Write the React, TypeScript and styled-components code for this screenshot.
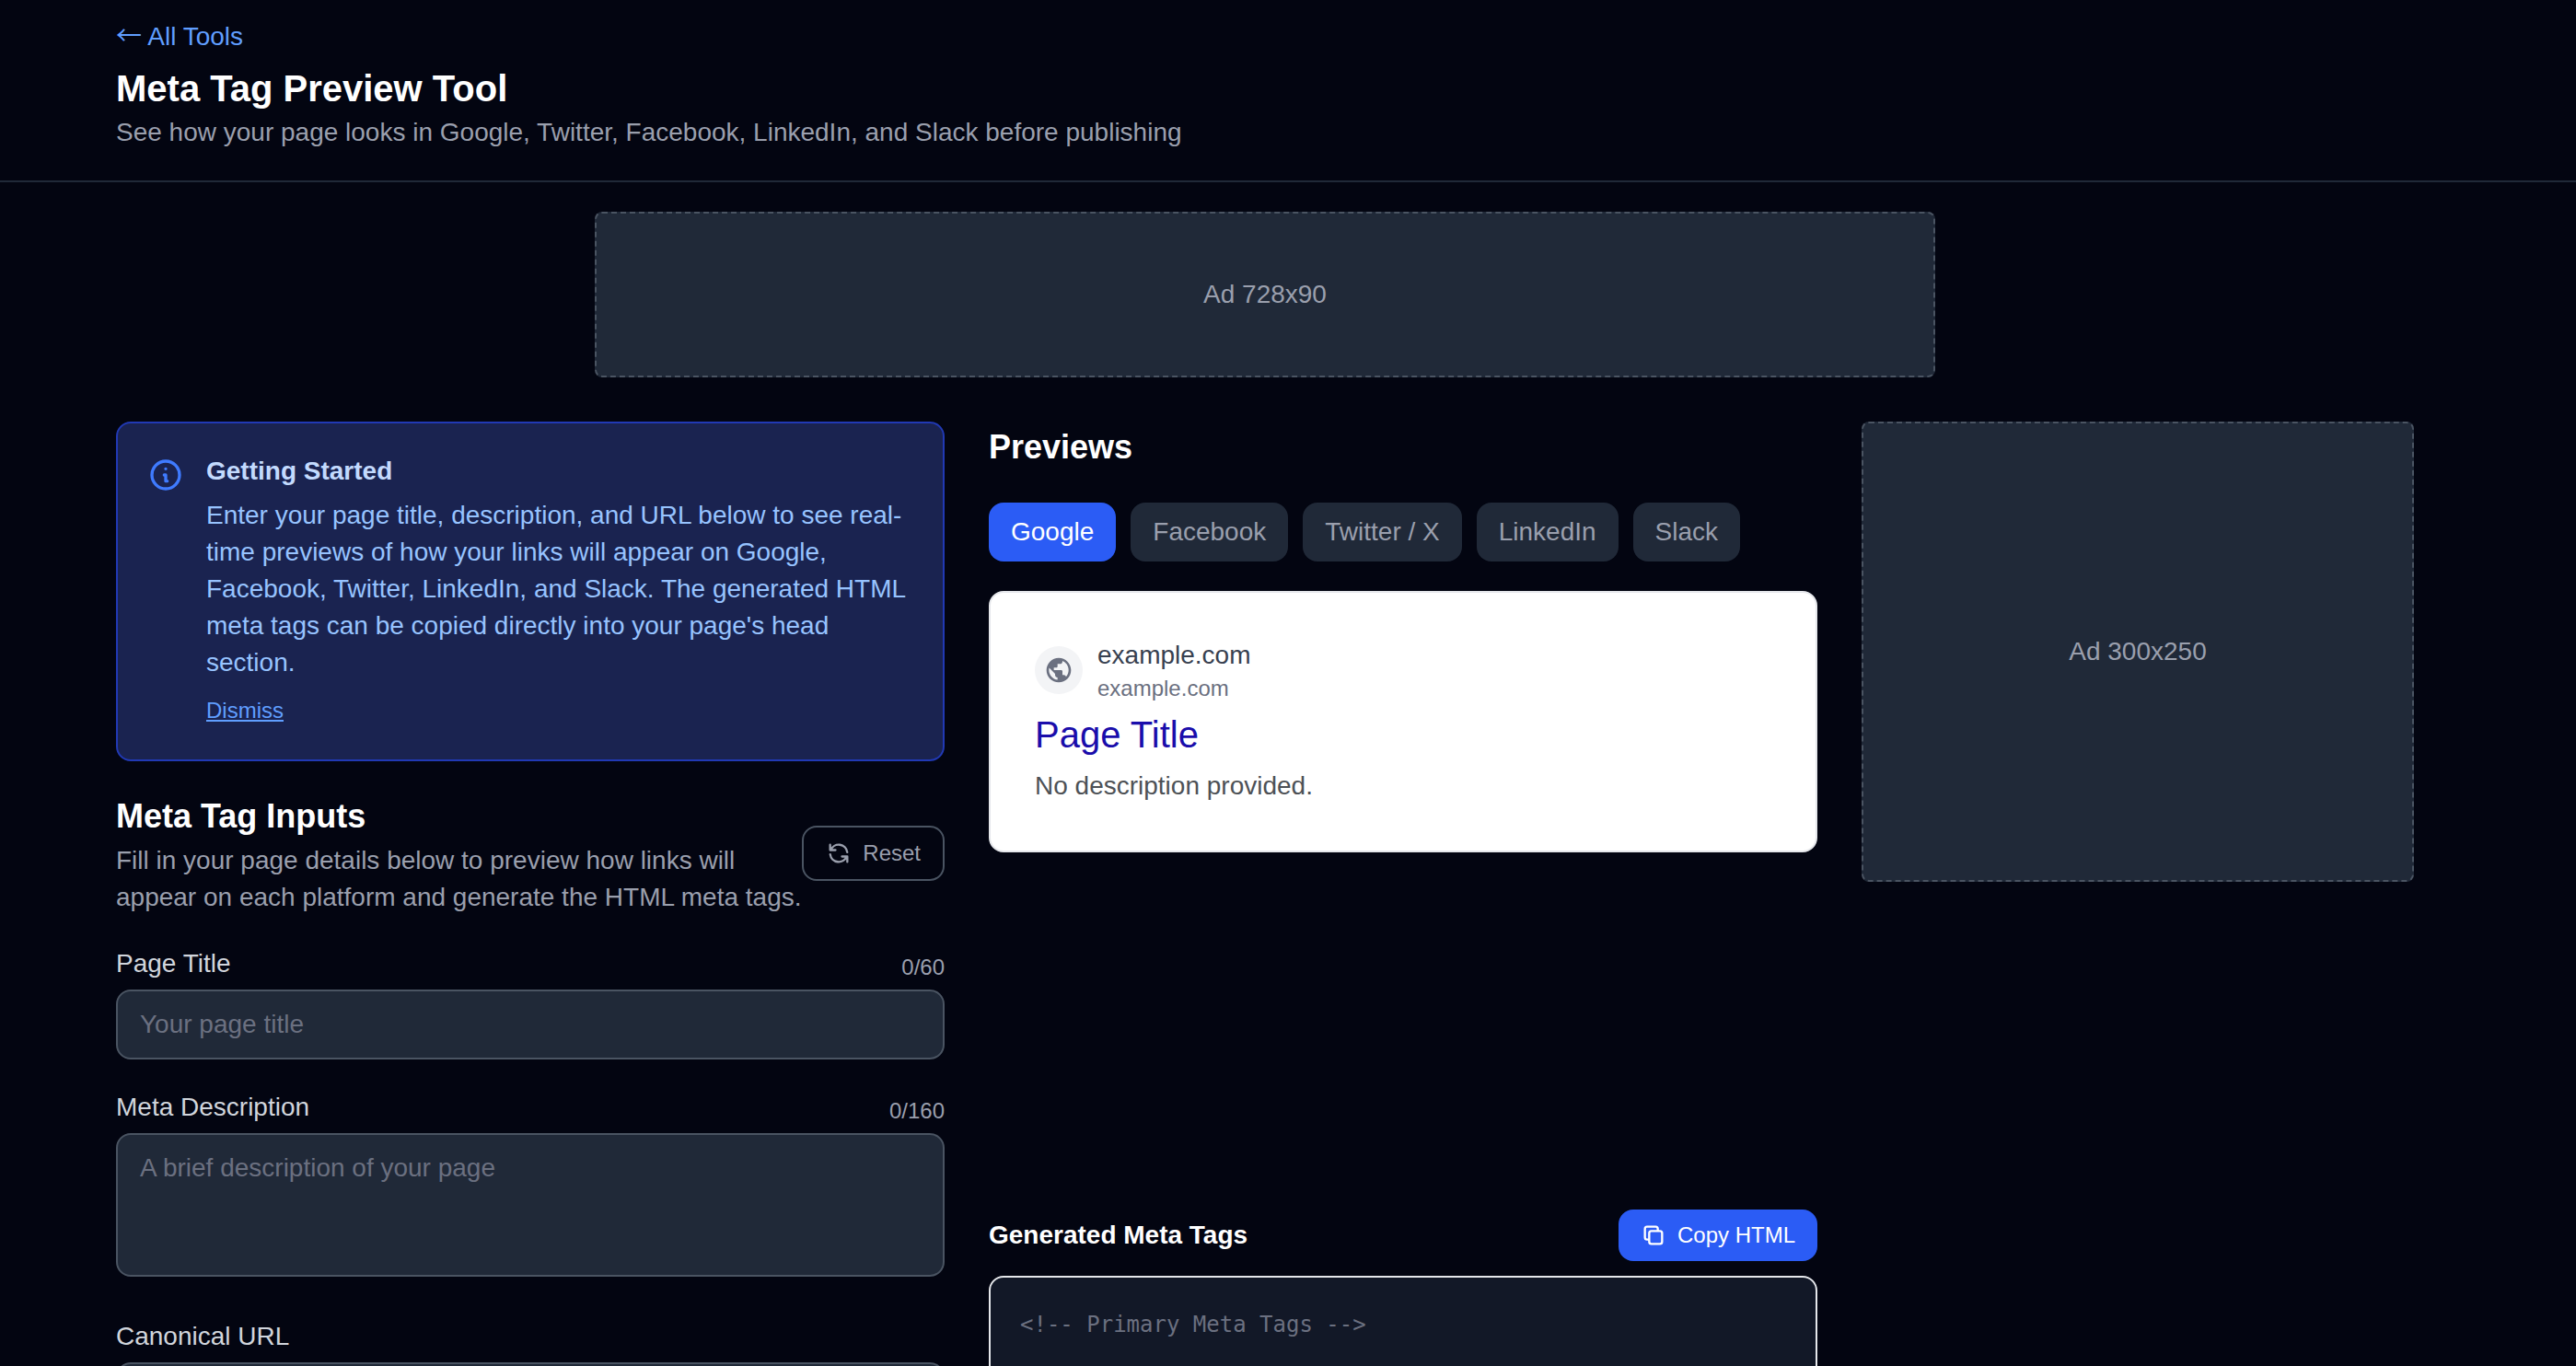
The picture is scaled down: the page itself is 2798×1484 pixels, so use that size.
import React, { useState } from "react";
import styled, { createGlobalStyle } from "styled-components";

const sans = `"Liberation Sans", Arial, Helvetica, sans-serif`;
const mono = `"DejaVu Sans Mono", Menlo, monospace`;

const color = {
  page: "#030511",
  surface: "#202938",
  line: "#4a5462",
  text: "#9a9fad",
  faint: "#6b7080",
  label: "#d1d5dc",
  accent: "#2b5cf5",
  link: "#609eff",
};

const GlobalStyle = createGlobalStyle`
  *, *::before, *::after { box-sizing: border-box; }
  body {
    margin: 0;
    background: ${color.page};
    color: #ffffff;
    font-family: ${sans};
    font-size: 28px;
    line-height: 40px;
  }
  h1, h2, h3, p, pre { margin: 0; }
  button, input, textarea { font-family: inherit; }
`;

const Page = styled.div`
  height: 100vh;
  overflow: hidden;
`;

const Header = styled.header`
  padding: 20px 0 32px;
  border-bottom: 2px solid ${color.surface};
`;

const Container = styled.div`
  max-width: 2610px;
  margin: 0 auto;
  padding: 0 82px 0 32px;
`;

const BackLink = styled.a`
  display: block;
  width: fit-content;
  margin-bottom: 8px;
  color: ${color.link};
  text-decoration: none;
`;

const Arrow = styled.span`
  display: inline-block;
  width: 28px;
  font-family: "Noto Sans CJK JP", sans-serif;
  line-height: 20px;
`;

const Title = styled.h1`
  font-size: 40px;
  line-height: 56px;
`;

const Muted = styled.p`
  color: ${color.text};
`;

const AdSlot = styled.div<{ $width: number; $height: number }>`
  display: flex;
  align-items: center;
  justify-content: center;
  width: ${(p) => p.$width}px;
  max-width: 100%;
  height: ${(p) => p.$height}px;
  border: 2px dashed ${color.line};
  border-radius: 8px;
  background: ${color.surface};
  color: ${color.text};
`;

const Banner = styled.div`
  display: flex;
  justify-content: center;
  padding: 32px 0 48px;
`;

const Columns = styled.main`
  display: grid;
  grid-template-columns: 1fr 1fr 600px;
  gap: 48px;
  align-items: start;
`;

const Notice = styled.aside`
  display: flex;
  gap: 24px;
  padding: 32px;
  margin-bottom: 32px;
  border: 2px solid #2139b4;
  border-radius: 16px;
  background: #1a2350;
`;

const NoticeIcon = styled.svg`
  flex: none;
  width: 40px;
  height: 40px;
  margin-top: 4px;
`;

const NoticeBody = styled.div`
  font-size: 32px;
  line-height: 48px;
`;

const NoticeTitle = styled.h3`
  margin-bottom: 8px;
  color: #c3dafe;
  font-size: 28px;
  line-height: 40px;
`;

const NoticeText = styled.p`
  color: #97c3ff;
  font-size: 28px;
  line-height: 40px;
`;

const Dismiss = styled.button`
  padding: 0;
  margin: 16px 0 0;
  border: 0;
  background: none;
  color: ${color.link};
  font-size: 24px;
  line-height: 32px;
  text-decoration: underline;
`;

const Heading = styled.h2`
  font-size: 36px;
  line-height: 56px;
`;

const FormIntro = styled.div`
  display: flex;
  align-items: center;
  justify-content: space-between;
  margin-bottom: 32px;
`;

const SmallButton = styled.button<{ $outlined?: boolean }>`
  display: flex;
  align-items: center;
  flex: none;
  gap: 12px;
  padding: 12px 24px;
  border: ${(p) => (p.$outlined ? `2px solid ${color.line}` : "0")};
  border-radius: 16px;
  background: ${(p) => (p.$outlined ? "none" : color.accent)};
  color: ${(p) => (p.$outlined ? color.text : "#ffffff")};
  font-size: 24px;
  line-height: 32px;
`;

const ButtonIcon = styled.svg`
  flex: none;
  width: 28px;
  height: 28px;
`;

const SiteIcon = styled.svg`
  width: 32px;
  height: 32px;
`;

const Field = styled.div`
  margin-bottom: 32px;
  font-size: 32px;
  line-height: 48px;
`;

const FieldHead = styled.div`
  display: flex;
  align-items: flex-end;
  justify-content: space-between;
  margin-bottom: 8px;
`;

const Label = styled.label`
  color: ${color.label};
  font-size: 28px;
  line-height: 40px;
`;

const Counter = styled.span`
  color: ${color.text};
  font-size: 24px;
  line-height: 32px;
`;

const TextInput = styled.input`
  display: block;
  width: 100%;
  padding: 16px 24px;
  border: 2px solid ${color.line};
  border-radius: 16px;
  background: ${color.surface};
  color: #ffffff;
  font-size: 28px;
  line-height: 40px;
  &::placeholder { color: ${color.faint}; opacity: 1; }
`;

const TextArea = styled.textarea`
  width: 100%;
  padding: 16px 24px;
  border: 2px solid ${color.line};
  border-radius: 16px;
  background: ${color.surface};
  color: #ffffff;
  font-size: 28px;
  line-height: 40px;
  resize: none;
  &::placeholder { color: ${color.faint}; opacity: 1; }
`;

const Tabs = styled.div`
  display: flex;
  flex-wrap: wrap;
  gap: 16px;
  margin: 32px 0;
`;

const Tab = styled.button<{ $active: boolean }>`
  padding: 12px 24px;
  border: 0;
  border-radius: 16px;
  background: ${(p) => (p.$active ? color.accent : color.surface)};
  color: ${(p) => (p.$active ? "#ffffff" : color.text)};
  font-size: 28px;
  line-height: 40px;
`;

const PreviewArea = styled.div`
  min-height: 640px;
  margin-bottom: 32px;
`;

const PreviewCard = styled.article`
  padding: 48px;
  border: 2px solid #e5e7eb;
  border-radius: 16px;
  background: #ffffff;
`;

const Site = styled.div`
  display: flex;
  align-items: center;
  gap: 16px;
`;

const Favicon = styled.span`
  display: flex;
  align-items: center;
  justify-content: center;
  width: 52px;
  height: 52px;
  border-radius: 50%;
  background: #f3f4f6;
`;

const SiteName = styled.p`
  color: #384150;
`;

const SiteUrl = styled.p`
  color: ${color.faint};
  font-size: 24px;
  line-height: 32px;
`;

const ResultTitle = styled.h3`
  margin: 8px 0;
  color: #1a0dab;
  font-size: 40px;
  font-weight: 400;
  line-height: 52px;
`;

const ResultText = styled.p`
  color: #4d5156;
  line-height: 44px;
`;

const CodeHead = styled.div`
  display: flex;
  align-items: center;
  justify-content: space-between;
  margin-bottom: 16px;
`;

const CodeTitle = styled.h3`
  font-size: 28px;
  line-height: 40px;
`;

const CodeBlock = styled.pre`
  padding: 32px;
  border: 2px solid #e5e7eb;
  border-radius: 16px;
  background: #121827;
  color: ${color.faint};
  font-family: ${mono};
  font-size: 24px;
  line-height: 38px;
`;

const networks = ["Google", "Facebook", "Twitter / X", "LinkedIn", "Slack"];

const code = `<!-- Primary Meta Tags -->

`;

export default function App() {
  const [active, setActive] = useState("Google");
  return (
    <Page>
      <GlobalStyle />
      <Header>
        <Container>
          <BackLink href="#">
            <Arrow>←</Arrow> All Tools
          </BackLink>
          <Title>Meta Tag Preview Tool</Title>
          <Muted>
            See how your page looks in Google, Twitter, Facebook, LinkedIn, and Slack before publishing
          </Muted>
        </Container>
      </Header>
      <Container>
        <Banner>
          <AdSlot $width={1456} $height={180}>Ad 728x90</AdSlot>
        </Banner>
        <Columns>
          <section>
            <Notice>
              <NoticeIcon viewBox="0 0 24 24" fill="none" stroke="#3f7bff" strokeWidth="2" strokeLinecap="round" strokeLinejoin="round">
                <circle cx="12" cy="12" r="9" />
                <path d="M13 16h-1v-4h-1m1-4h.01" />
              </NoticeIcon>
              <NoticeBody>
                <NoticeTitle>Getting Started</NoticeTitle>
                <NoticeText>
                  Enter your page title, description, and URL below to see real-time previews of how your
                  links will appear on Google, Facebook, Twitter, LinkedIn, and Slack. The generated HTML
                  meta tags can be copied directly into your page's head section.
                </NoticeText>
                <Dismiss type="button">Dismiss</Dismiss>
              </NoticeBody>
            </Notice>
            <FormIntro>
              <div>
                <Heading>Meta Tag Inputs</Heading>
                <Muted>
                  Fill in your page details below to preview how links will appear on each platform and
                  generate the HTML meta tags.
                </Muted>
              </div>
              <SmallButton type="button" $outlined>
                <ButtonIcon viewBox="0 0 24 24" fill="none" stroke="currentColor" strokeWidth="2" strokeLinecap="round" strokeLinejoin="round">
                  <path d="M4 4v5h.582m15.356 2A8.001 8.001 0 004.582 9m0 0H9m11 11v-5h-.581m0 0a8.003 8.003 0 01-15.357-2m15.357 2H15" />
                </ButtonIcon>
                Reset
              </SmallButton>
            </FormIntro>
            <Field>
              <FieldHead>
                <Label htmlFor="title">Page Title</Label>
                <Counter>0/60</Counter>
              </FieldHead>
              <TextInput id="title" type="text" placeholder="Your page title" />
            </Field>
            <Field>
              <FieldHead>
                <Label htmlFor="description">Meta Description</Label>
                <Counter>0/160</Counter>
              </FieldHead>
              <TextArea id="description" rows={3} placeholder="A brief description of your page" />
            </Field>
            <Field>
              <FieldHead>
                <Label htmlFor="url">Canonical URL</Label>
              </FieldHead>
              <TextInput id="url" type="url" />
            </Field>
          </section>
          <section>
            <Heading>Previews</Heading>
            <Tabs>
              {networks.map((name) => (
                <Tab key={name} type="button" $active={name === active} onClick={() => setActive(name)}>
                  {name}
                </Tab>
              ))}
            </Tabs>
            <PreviewArea>
              <PreviewCard>
                <Site>
                  <Favicon>
                    <SiteIcon viewBox="0 0 24 24" fill="#6b7080">
                      <path d="M12 2C6.48 2 2 6.48 2 12s4.48 10 10 10 10-4.48 10-10S17.52 2 12 2zm-1 17.93c-3.95-.49-7-3.85-7-7.93 0-.62.08-1.21.21-1.79L9 15v1c0 1.1.9 2 2 2v1.93zm6.9-2.54c-.26-.81-1-1.39-1.9-1.39h-1v-3c0-.55-.45-1-1-1H8v-2h2c.55 0 1-.45 1-1V7h2c1.1 0 2-.9 2-2v-.41c2.93 1.19 5 4.06 5 7.41 0 2.08-.8 3.97-2.1 5.39z" />
                    </SiteIcon>
                  </Favicon>
                  <div>
                    <SiteName>example.com</SiteName>
                    <SiteUrl>example.com</SiteUrl>
                  </div>
                </Site>
                <ResultTitle>Page Title</ResultTitle>
                <ResultText>No description provided.</ResultText>
              </PreviewCard>
            </PreviewArea>
            <CodeHead>
              <CodeTitle>Generated Meta Tags</CodeTitle>
              <SmallButton type="button">
                <ButtonIcon viewBox="0 0 24 24" fill="none" stroke="currentColor" strokeWidth="2" strokeLinecap="round" strokeLinejoin="round">
                  <path d="M8 16H6a2 2 0 01-2-2V6a2 2 0 012-2h8a2 2 0 012 2v2m-6 12h8a2 2 0 002-2v-8a2 2 0 00-2-2h-8a2 2 0 00-2 2v8a2 2 0 002 2z" />
                </ButtonIcon>
                Copy HTML
              </SmallButton>
            </CodeHead>
            <CodeBlock>{code}</CodeBlock>
          </section>
          <AdSlot $width={600} $height={500}>Ad 300x250</AdSlot>
        </Columns>
      </Container>
    </Page>
  );
}
